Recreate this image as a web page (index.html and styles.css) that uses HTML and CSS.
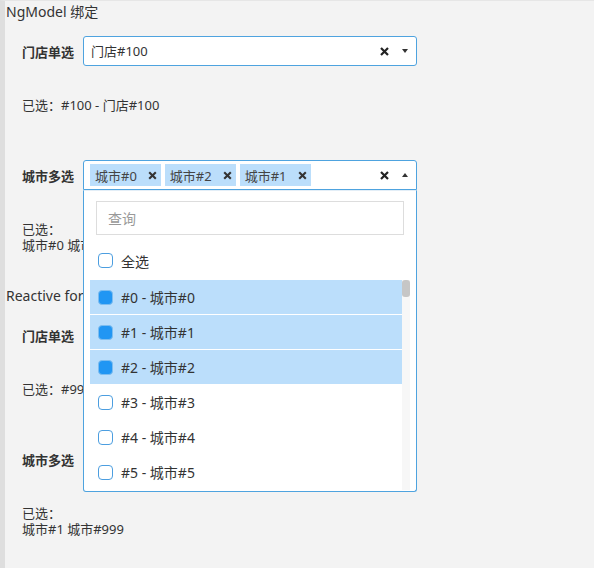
FILE: index.html
```html
<!DOCTYPE html>
<html lang="zh">
<head>
<meta charset="utf-8">
<title>NgModel 绑定</title>
<link rel="stylesheet" href="styles.css">
</head>
<body>
<div class="page">
  <section class="section">
    <div class="title">NgModel 绑定</div>
    <div class="field">
      <label class="label">门店单选</label>
      <div class="select">
        <div class="value">门店#100</div>
        <span class="clear"><svg width="9" height="9" viewBox="0 0 9 9"><path d="M1 1L8 8M8 1L1 8" stroke="#222" stroke-width="2.2"/></svg></span>
        <span class="arrow down"></span>
      </div>
    </div>
    <p class="result">已选：#100 - 门店#100</p>
    <div class="field">
      <label class="label">城市多选</label>
      <div class="select open">
        <div class="tags">
          <span class="tag">城市#0<svg class="tag-x" width="9" height="9" viewBox="0 0 9 9"><path d="M1.2 1.2L7.8 7.8M7.8 1.2L1.2 7.8" stroke="#333" stroke-width="2.1"/></svg></span>
          <span class="tag">城市#2<svg class="tag-x" width="9" height="9" viewBox="0 0 9 9"><path d="M1.2 1.2L7.8 7.8M7.8 1.2L1.2 7.8" stroke="#333" stroke-width="2.1"/></svg></span>
          <span class="tag">城市#1<svg class="tag-x" width="9" height="9" viewBox="0 0 9 9"><path d="M1.2 1.2L7.8 7.8M7.8 1.2L1.2 7.8" stroke="#333" stroke-width="2.1"/></svg></span>
        </div>
        <span class="clear"><svg width="9" height="9" viewBox="0 0 9 9"><path d="M1 1L8 8M8 1L1 8" stroke="#222" stroke-width="2.2"/></svg></span>
        <span class="arrow up"></span>
        <div class="panel">
          <div class="search"><span class="placeholder">查询</span></div>
          <div class="option all"><span class="box"></span>全选</div>
          <div class="list-wrap">
            <div class="list">
              <div class="option selected"><span class="box checked"></span>#0 - 城市#0</div>
              <div class="option selected"><span class="box checked"></span>#1 - 城市#1</div>
              <div class="option selected"><span class="box checked"></span>#2 - 城市#2</div>
              <div class="option"><span class="box"></span>#3 - 城市#3</div>
              <div class="option"><span class="box"></span>#4 - 城市#4</div>
              <div class="option"><span class="box"></span>#5 - 城市#5</div>
              <div class="option"><span class="box"></span>#6 - 城市#6</div>
            </div>
            <div class="track"><div class="thumb"></div></div>
          </div>
        </div>
      </div>
    </div>
    <p class="result">已选：<br>城市#0 城市#2 城市#1</p>
  </section>
  <section class="section">
    <div class="title">Reactive forms 绑定</div>
    <div class="field">
      <label class="label">门店单选</label>
      <div class="select"></div>
    </div>
    <p class="result">已选：#999 - 门店#999</p>
    <div class="field">
      <label class="label">城市多选</label>
      <div class="select"></div>
    </div>
    <p class="result">已选：<br>城市#1 城市#999</p>
  </section>
</div>
</body>
</html>
```
FILE: styles.css
```css
html, body {
  margin: 0;
  padding: 0;
  background: #f3f3f3;
}
body {
  font-family: "Segoe UI", "Noto Sans", "Noto Sans CJK SC", sans-serif;
  font-size: 13px;
  color: #333;
}
.page {
  min-height: 568px;
  box-sizing: border-box;
  border-left: 5px solid #dedede;
  border-top: 1px solid #e6e6e6;
  padding: 3px 0 0 1px;
}
.section + .section {
  margin-top: 35px;
}
.title {
  font-size: 14px;
  line-height: 16px;
  height: 16px;
  white-space: nowrap;
}
.field {
  display: flex;
  align-items: center;
  padding-left: 16px;
  margin-top: 16px;
  height: 30px;
}
.result + .field {
  margin-top: 47px;
}
.label {
  width: 61px;
  flex: none;
  font-weight: bold;
  font-size: 13px;
}
.select {
  position: relative;
  box-sizing: border-box;
  width: 334px;
  height: 30px;
  border: 1px solid #4ea3df;
  border-radius: 3px;
  background: #fff;
  display: flex;
  align-items: center;
  padding: 0 7px 0 7px;
}
.select.open {
  border-radius: 3px 3px 0 0;
  padding-left: 6px;
}
.value {
  flex: 1;
  font-size: 13px;
  padding-bottom: 1px;
}
.tags {
  flex: 1;
  display: flex;
  gap: 4px;
}
.tag {
  display: flex;
  align-items: center;
  height: 22px;
  background: #bbdefb;
  font-size: 13px;
  padding: 0 4px 0 5px;
  color: #444;
}
.tag-x {
  margin-left: 11px;
}
.clear {
  display: flex;
  margin-right: 13px;
}
.arrow {
  width: 0;
  height: 0;
  border-left: 3.5px solid transparent;
  border-right: 3.5px solid transparent;
  margin-right: 1px;
}
.arrow.down {
  border-top: 4px solid #333;
}
.arrow.up {
  border-bottom: 4px solid #333;
}
.panel {
  position: absolute;
  left: -1px;
  right: -1px;
  top: 29px;
  box-sizing: border-box;
  height: 302px;
  background: #fff;
  border: 1px solid #4ea3df;
  border-top: 1px solid #e3eef7;
  border-radius: 0 0 3px 3px;
  padding: 10px 6px 0 6px;
  z-index: 10;
}
.search {
  box-sizing: border-box;
  height: 34px;
  margin: 0 6px;
  border: 1px solid #ddd;
  display: flex;
  align-items: center;
  padding-left: 11px;
  font-size: 14px;
  color: #999;
}
.option {
  display: flex;
  align-items: center;
  height: 35px;
  box-sizing: border-box;
  padding-left: 8px;
  font-size: 14px;
  color: #333;
  border-bottom: 1px solid #fff;
}
.option.all {
  margin-top: 8px;
  border-bottom: none;
}
.option.selected {
  background: #bbdefb;
}
.box {
  box-sizing: border-box;
  width: 15px;
  height: 15px;
  border: 1px solid #4c9ee0;
  border-radius: 4px;
  background: #fff;
  margin-right: 8px;
  flex: none;
}
.box.checked {
  background: #2196f3;
  border: 1.5px solid #7dbdf0;
}
.list-wrap {
  display: flex;
  margin-top: 2px;
  height: 210px;
  overflow: hidden;
}
.list {
  flex: 1;
}
.track {
  width: 8px;
  background: #f7f7f7;
  flex: none;
}
.thumb {
  height: 17px;
  background: #c6c6c6;
  border-radius: 3px;
}
.result {
  margin: 31px 0 0 0;
  padding-left: 16px;
  line-height: 16px;
  font-size: 13px;
}
```
